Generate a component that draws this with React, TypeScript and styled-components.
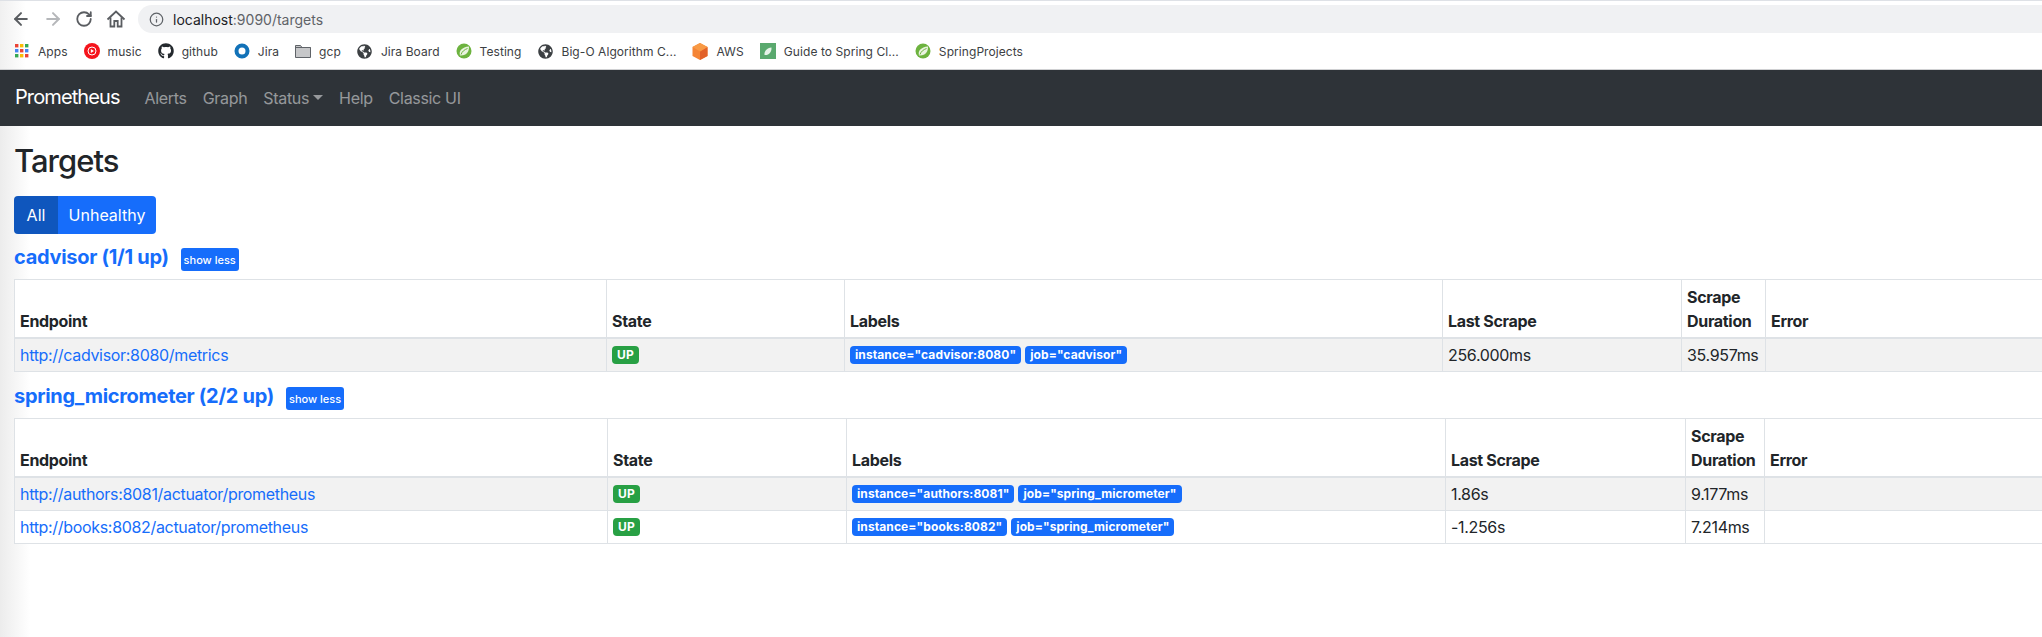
import React from 'react'
import styled, { createGlobalStyle } from 'styled-components'
import { ArrowLeft, ArrowRight, RotateCw, Info } from 'lucide-react'
import { FaGithub, FaGlobeAmericas } from 'react-icons/fa'

const GlobalStyle = createGlobalStyle`
  html, body {
    margin: 0;
    width: 2042px;
    height: 637px;
    overflow: hidden;
    background: #fff;
    font-family: Inter, "Liberation Sans", sans-serif;
    color: #212529;
  }
`

const Page = styled.div`
  width: 2042px;
  height: 637px;
  overflow: hidden;
`

const Toolbar = styled.div`
  display: flex;
  align-items: center;
  height: 33px;
  box-sizing: border-box;
  padding: 4px 0 0 11px;
  border-top: 1px solid #dee1e6;
  background: linear-gradient(90deg, #f0f0f0, #fff 26px);
`

const ToolButton = styled.span<{ $gap: number; $color?: string }>`
  display: flex;
  width: 20px;
  margin-right: ${p => p.$gap}px;
  color: ${p => p.$color || '#5a5d61'};
`

const AddressBar = styled.div`
  flex: 1;
  display: flex;
  align-items: center;
  gap: 9px;
  height: 28px;
  padding-left: 11px;
  border-radius: 14px 0 0 14px;
  background: #f0f1f3;
  font-size: 14px;
  color: #5f6368;
`

const Host = styled.span`
  color: #202124;
`

const Bookmarks = styled.div`
  display: flex;
  align-items: center;
  gap: 16px;
  height: 37px;
  box-sizing: border-box;
  padding-left: 14px;
  border-bottom: 1px solid #cfd0d2;
  background: linear-gradient(90deg, #f0f0f0, #fff 26px);
`

const Bookmark = styled.div`
  display: flex;
  align-items: center;
  gap: 8px;
  font-size: 12px;
  letter-spacing: 0.07px;
  color: #3c4043;
`

const BookmarkIcon = styled.span`
  display: flex;
  align-items: center;
  justify-content: center;
  width: 16px;
  height: 16px;
  color: #3c4043;
`

const Navbar = styled.nav`
  display: flex;
  align-items: center;
  height: 56px;
  padding-left: 15px;
  background: #2e3338;
`

const Brand = styled.a`
  margin: 0 17px 2px 0;
  font-size: 20px;
  letter-spacing: -0.9px;
  color: #fff;
`

const NavLink = styled.a`
  display: flex;
  align-items: center;
  padding: 0 8px;
  font-size: 16px;
  letter-spacing: -0.32px;
  color: rgba(255, 255, 255, 0.5);
`

const Caret = styled.span`
  width: 0;
  height: 0;
  margin-left: 4px;
  margin-top: -2px;
  border-top: 5px solid rgba(255, 255, 255, 0.5);
  border-left: 5px solid transparent;
  border-right: 5px solid transparent;
`

const Content = styled.main`
  height: 511px;
  padding: 16px 0 0 14px;
  background: linear-gradient(90deg, #ececec, #fff 30px);
`

const Title = styled.h1`
  margin: 0 0 16px;
  font-size: 31px;
  line-height: 38px;
  font-weight: 500;
  letter-spacing: -1px;
`

const ButtonGroup = styled.div`
  display: flex;
  width: 142px;
  height: 38px;
  margin-bottom: 14px;
  border-radius: 4px;
  overflow: hidden;
`

const FilterButton = styled.button<{ $active?: boolean; $width: number }>`
  width: ${p => p.$width}px;
  padding: 0;
  border: 0;
  background: ${p => (p.$active ? '#0f56bd' : '#166dfb')};
  color: #fff;
  font-family: inherit;
  font-size: 16px;
`

const Section = styled.section`
  margin-bottom: 15px;
`

const SectionHeader = styled.div`
  display: flex;
  align-items: flex-start;
  gap: 12px;
  margin-bottom: 8px;
`

const JobName = styled.a`
  font-size: 20px;
  line-height: 18px;
  font-weight: 700;
  letter-spacing: -0.3px;
  color: #166dfb;
`

const ToggleButton = styled.button`
  width: 58px;
  height: 23px;
  padding: 0;
  border: 0;
  border-radius: 3px;
  background: #166dfb;
  color: #fff;
  font-family: inherit;
  font-size: 11px;
  font-weight: 500;
`

const Table = styled.table`
  width: 2100px;
  table-layout: fixed;
  border-collapse: collapse;
  background: #fff;
  font-size: 16px;
  line-height: 24px;
  letter-spacing: -0.32px;
`

const Col = styled.col<{ $width: number }>`
  width: ${p => p.$width}px;
`

const Th = styled.th`
  padding: 4.5px 5px;
  border: 1px solid #dee2e6;
  border-bottom: 2px solid #dee2e6;
  text-align: left;
  vertical-align: bottom;
  font-weight: 700;
`

const Row = styled.tr<{ $striped?: boolean }>`
  background: ${p => (p.$striped ? '#f2f2f2' : '#fff')};
`

const Td = styled.td`
  height: 24px;
  padding: 4px 5px;
  border: 1px solid #dee2e6;
  vertical-align: top;
`

const EndpointLink = styled.a`
  color: #166dfb;
`

const Badge = styled.span<{ $green?: boolean }>`
  display: inline-block;
  height: 18px;
  margin: 3px 4px 0 0;
  padding: 0 5px;
  border-radius: 4px;
  background: ${p => (p.$green ? '#28a044' : '#166dfb')};
  color: #fff;
  font-size: 12px;
  line-height: 18px;
  font-weight: 700;
  letter-spacing: 0.1px;
  vertical-align: top;
`

const BackIcon = styled(ArrowLeft)`
  stroke-width: 2.4;
`

const ForwardIcon = styled(ArrowRight)`
  stroke-width: 2.4;
`

const ReloadIcon = styled(RotateCw)`
  stroke-width: 2.4;
`

const HomeIcon = () => (
  <svg width="20" height="20" viewBox="0 0 20 20" fill="none" stroke="currentColor" strokeWidth="1.8" strokeLinejoin="miter">
    <path d="M1.5 10.5 10 2.5l8.500 8" />
    <path d="M4.500 8.500v9h3.800v-5.500h3.400v5.500h3.800v-9" />
  </svg>
)

const SpringIcon = ({ fill = '#6db33f' }: { fill?: string }) => (
  <svg width="16" height="16" viewBox="0 0 16 16">
    <circle cx="8" cy="8" r="7.500" fill={fill} />
    <path d="M4 12.500C2.500 8 6 4 13 3.500c.2 5-2.500 9.500-9 9z" fill="#e9f3df" />
    <path d="M5 11.500C6 8.500 8.500 6.500 11.500 5.500" stroke={fill} strokeWidth="1" fill="none" />
  </svg>
)

const AppsIcon = () => {
  const colors = ['#ea4335', '#fbbc05', '#34a853', '#4285f4', '#ea4335', '#4285f4', '#34a853', '#fbbc05', '#ea4335']
  return (
    <svg width="14" height="14" viewBox="0 0 14 14">
      {colors.map((c, i) => (
        <rect key={i} x={(i % 3) * 5} y={Math.floor(i / 3) * 5} width="3.400" height="3.400" fill={c} />
      ))}
    </svg>
  )
}

const MusicIcon = () => (
  <svg width="16" height="16" viewBox="0 0 16 16">
    <circle cx="8" cy="8" r="8" fill="#f5141c" />
    <circle cx="8" cy="8" r="4" fill="none" stroke="#fff" strokeWidth="1" />
    <path d="M6.800 6v4L10 8z" fill="#fff" />
  </svg>
)

const JiraIcon = () => (
  <svg width="16" height="16" viewBox="0 0 16 16">
    <circle cx="8" cy="8" r="5.500" fill="none" stroke="#1272b8" strokeWidth="4" />
  </svg>
)

const FolderIcon = () => (
  <svg width="16" height="14" viewBox="0 0 16 14">
    <path d="M.5 1.500h5l1.500 2h8.500v10H.5z" fill="#c6c7c9" stroke="#5f6368" />
    <path d="M.5 3.500h15" stroke="#5f6368" />
  </svg>
)

const CubeIcon = () => (
  <svg width="16" height="17" viewBox="0 0 16 17">
    <path d="M8 0l7.500 4v9L8 17 .5 13V4z" fill="#f58536" />
    <path d="M8 8.500l7.500-4.500v9L8 17z" fill="#e2622a" />
    <path d="M8 0l7.500 4L8 8.500.5 4z" fill="#f89a45" />
  </svg>
)

const GuideIcon = () => (
  <svg width="16" height="16" viewBox="0 0 16 16">
    <rect width="16" height="16" fill="#5aa96e" />
    <path d="M4.500 12C4 8 7 5 11.500 4.500 11.800 9 9 12.500 4.500 12z" fill="#e6f3e8" />
  </svg>
)

const bookmarks: { icon: React.ReactNode; label: string }[] = [
  { icon: <AppsIcon />, label: 'Apps' },
  { icon: <MusicIcon />, label: 'music' },
  { icon: <FaGithub size={16} color="#24292e" />, label: 'github' },
  { icon: <JiraIcon />, label: 'Jira' },
  { icon: <FolderIcon />, label: 'gcp' },
  { icon: <FaGlobeAmericas size={15} />, label: 'Jira Board' },
  { icon: <SpringIcon />, label: 'Testing' },
  { icon: <FaGlobeAmericas size={15} />, label: 'Big-O Algorithm C...' },
  { icon: <CubeIcon />, label: 'AWS' },
  { icon: <GuideIcon />, label: 'Guide to Spring Cl...' },
  { icon: <SpringIcon />, label: 'SpringProjects' },
]

type Target = { endpoint: string; labels: string[]; lastScrape: string; duration: string }

type Job = { name: string; widths: number[]; targets: Target[] }

const jobs: Job[] = [
  {
    name: 'cadvisor (1/1 up)',
    widths: [592, 238, 598, 239, 84, 349],
    targets: [
      {
        endpoint: 'http://cadvisor:8080/metrics',
        labels: ['instance="cadvisor:8080"', 'job="cadvisor"'],
        lastScrape: '256.000ms',
        duration: '35.957ms',
      },
    ],
  },
  {
    name: 'spring_micrometer (2/2 up)',
    widths: [593, 239, 599, 240, 79, 350],
    targets: [
      {
        endpoint: 'http://authors:8081/actuator/prometheus',
        labels: ['instance="authors:8081"', 'job="spring_micrometer"'],
        lastScrape: '1.86s',
        duration: '9.177ms',
      },
      {
        endpoint: 'http://books:8082/actuator/prometheus',
        labels: ['instance="books:8082"', 'job="spring_micrometer"'],
        lastScrape: '-1.256s',
        duration: '7.214ms',
      },
    ],
  },
]

const JobSection = ({ job }: { job: Job }) => (
  <Section>
    <SectionHeader>
      <JobName>{job.name}</JobName>
      <ToggleButton>show less</ToggleButton>
    </SectionHeader>
    <Table>
      <colgroup>
        {job.widths.map((w, i) => (
          <Col key={i} $width={w} />
        ))}
      </colgroup>
      <thead>
        <tr>
          <Th>Endpoint</Th>
          <Th>State</Th>
          <Th>Labels</Th>
          <Th>Last Scrape</Th>
          <Th>Scrape Duration</Th>
          <Th>Error</Th>
        </tr>
      </thead>
      <tbody>
        {job.targets.map((t, i) => (
          <Row key={t.endpoint} $striped={i % 2 === 0}>
            <Td>
              <EndpointLink>{t.endpoint}</EndpointLink>
            </Td>
            <Td>
              <Badge $green>UP</Badge>
            </Td>
            <Td>
              {t.labels.map(l => (
                <Badge key={l}>{l}</Badge>
              ))}
            </Td>
            <Td>{t.lastScrape}</Td>
            <Td>{t.duration}</Td>
            <Td />
          </Row>
        ))}
      </tbody>
    </Table>
  </Section>
)

export default function App() {
  return (
    <Page>
      <GlobalStyle />
      <Toolbar>
        <ToolButton $gap={12}>
          <BackIcon size={20} />
        </ToolButton>
        <ToolButton $gap={12} $color="#b5b7ba">
          <ForwardIcon size={20} />
        </ToolButton>
        <ToolButton $gap={11}>
          <ReloadIcon size={18} />
        </ToolButton>
        <ToolButton $gap={12}>
          <HomeIcon />
        </ToolButton>
        <AddressBar>
          <Info size={15} />
          <span>
            <Host>localhost</Host>:9090/targets
          </span>
        </AddressBar>
      </Toolbar>
      <Bookmarks>
        {bookmarks.map((b, i) => (
          <Bookmark key={i}>
            <BookmarkIcon>{b.icon}</BookmarkIcon>
            {b.label}
          </Bookmark>
        ))}
      </Bookmarks>
      <Navbar>
        <Brand>Prometheus</Brand>
        <NavLink>Alerts</NavLink>
        <NavLink>Graph</NavLink>
        <NavLink>
          Status
          <Caret />
        </NavLink>
        <NavLink>Help</NavLink>
        <NavLink>Classic UI</NavLink>
      </Navbar>
      <Content>
        <Title>Targets</Title>
        <ButtonGroup>
          <FilterButton $active $width={44}>
            All
          </FilterButton>
          <FilterButton $width={98}>Unhealthy</FilterButton>
        </ButtonGroup>
        {jobs.map(j => (
          <JobSection key={j.name} job={j} />
        ))}
      </Content>
    </Page>
  )
}
